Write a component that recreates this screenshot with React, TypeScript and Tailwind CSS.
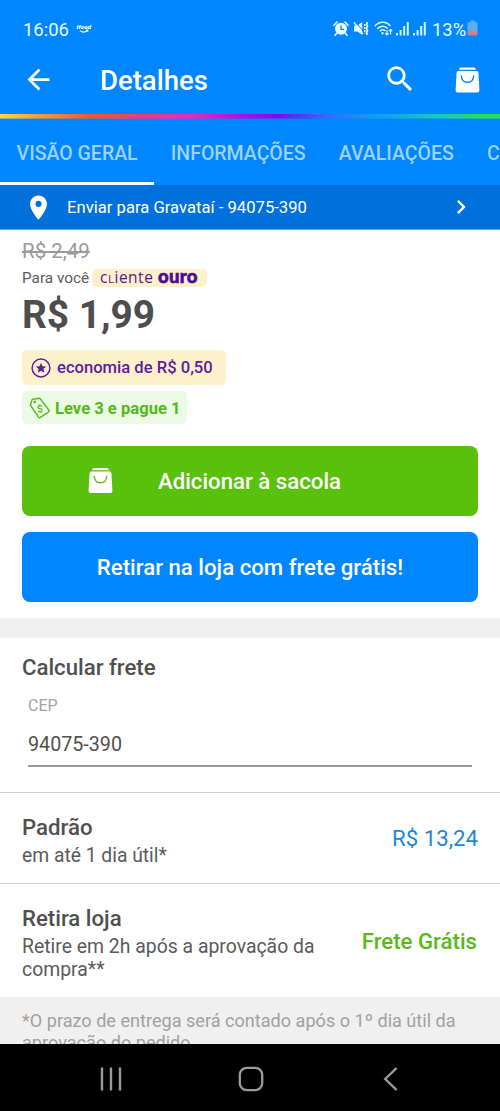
import { MdArrowBack, MdChevronRight, MdPlace, MdSearch } from "react-icons/md";

const tabs = ["VISÃO GERAL", "INFORMAÇÕES", "AVALIAÇÕES", "C"];

function BagIcon({ className, stroke }: { className: string; stroke: string }) {
  return (
    <svg viewBox="0 0 25 26" className={className} fill="none">
      <path d="M6.2 0.6h12.6c1.2 0 1.9.8 2.2 2.2H4c.3-1.4 1-2.2 2.2-2.2z" fill="#fff" />
      <path d="M3.4 4h18.2c1 0 1.7.6 1.8 1.5l1 17.6c.1 1.5-.7 2.5-2 2.5H2.6c-1.3 0-2.1-1-2-2.5l1-17.6C1.7 4.6 2.4 4 3.4 4z" fill="#fff" />
      <path d="M6.3 9c.3 4.1 2.7 6.2 6.2 6.2s5.9-2.1 6.200-6.200" stroke={stroke} strokeWidth="1.4" strokeLinecap="round" />
    </svg>
  );
}

function AlarmIcon() {
  return (
    <svg viewBox="0 0 16 15" className="h-[15px] w-4" fill="none">
      <circle cx="8" cy="7.8" r="6" fill="#eaffff" />
      <path d="M1 4.3 4 1M15 4.3 12 1M3.7 12.3 2 14.3M12.3 12.3l1.7 2" stroke="#eaffff" strokeWidth="1.6" strokeLinecap="round" />
      <path d="M8 4.3v4h3.2" stroke="#0086ff" strokeWidth="1.3" />
    </svg>
  );
}

function MuteIcon() {
  return (
    <svg viewBox="0 0 16 15" className="h-[15px] w-4" fill="none">
      <path d="M1 4.8h3L9.2 1v13L4.5 10.5H1z" fill="#eaffff" />
      <path d="M2.2 0.5 10.5 10.5" stroke="#0086ff" strokeWidth="1" />
      <path d="M.8 1.2 9.8 12.8" stroke="#eaffff" strokeWidth="1.3" />
      <path d="M11.7 3v9.5" stroke="#eaffff" strokeWidth="1.5" strokeDasharray="2 1" />
      <path d="m14.5 1-1 2.2 1 2.1-1 2.2 1 2.1-1 2.2 1 2.2" stroke="#eaffff" strokeWidth="1.7" />
    </svg>
  );
}

function WifiIcon() {
  return (
    <svg viewBox="0 0 19 15" className="h-[15px] w-[19px]" fill="none">
      <path d="M.8 5.2C5-.1 12.2-.1 16.3 4.9M3.3 7.8C6.2 4.3 11 4.3 13.8 7.5M5.8 10.3c1.7-2 4-2 5.6-.2" stroke="#dffbff" strokeWidth="1.5" />
      <path d="m8.6 13.8-1.7-2c1-.9 2.4-.9 3.3 0z" fill="#dffbff" />
      <path d="M13 9v5m-1.7-1.8L13 13.9l1.7-1.7M16.6 13.5V8.5M15 10.2l1.6-1.8 1.6 1.8" stroke="#dffbff" strokeWidth="1.2" />
    </svg>
  );
}

function SignalIcon() {
  return (
    <svg viewBox="0 0 13 15" className="h-[15px] w-[13px]" fill="#d5f7ff">
      <rect x="0" y="12" width="2" height="2.5" />
      <rect x="3.6" y="9" width="2" height="5.5" />
      <rect x="7.2" y="5" width="2" height="9.5" />
      <rect x="10.8" y="1" width="2" height="13.5" />
    </svg>
  );
}

function BatteryIcon() {
  return (
    <svg viewBox="0 0 11 16" className="-mt-0.5 h-4 w-[11px]">
      <path d="M3.5 0.5h4v1.7h1.7c.8 0 1.3.5 1.3 1.3V11H.5V3.5c0-.8.5-1.3 1.3-1.3h1.7z" fill="#63adee" />
      <path d="M.5 11h10v3.2c0 .8-.5 1.3-1.3 1.3H1.8c-.8 0-1.3-.5-1.3-1.3z" fill="#d97b88" />
    </svg>
  );
}

function StatusBar() {
  return (
    <div className="flex h-[58px] items-center pl-[23px] pr-[22px] text-[#e6fbff]">
      <span className="w-[47px] pt-px text-[18.4px]">16:06</span>
      <svg viewBox="0 0 16 13" className="mb-0.5 ml-1.5 h-[13px] w-4" fill="none">
        <text x="0.5" y="7" fontSize="6.2" fontWeight="900" fontStyle="italic" fill="#fff" textLength="14.5" lengthAdjust="spacingAndGlyphs">
          ifood
        </text>
        <path d="M4 8.7c2.2 1.9 5.2 1.7 7.5-.4M9.8 8.1l2-.2-.2 1.9" stroke="#fff" strokeWidth="1.1" />
      </svg>
      <div className="ml-auto flex items-center">
        <span className="-ml-0.5 flex"><AlarmIcon /></span>
        <span className="ml-1 flex"><MuteIcon /></span>
        <span className="ml-[5px] flex"><WifiIcon /></span>
        <span className="ml-[3px] flex"><SignalIcon /></span>
        <span className="ml-1 flex"><SignalIcon /></span>
        <span className="ml-1.5 w-[35px] pt-px text-[18.4px]">13%</span>
        <BatteryIcon />
      </div>
    </div>
  );
}

function Header() {
  return (
    <header className="bg-[#0086ff] text-white">
      <StatusBar />
      <div className="flex h-14 items-start">
        <MdArrowBack className="ml-[22px] mt-[5px] size-[33px]" />
        <h1 className="ml-[45px] w-[283px] text-[27.5px] font-medium leading-[45px]">Detalhes</h1>
        <MdSearch className="mt-1 size-[34px]" />
        <BagIcon className="ml-[38px] mt-[9px] h-[26px] w-[25px]" stroke="#0086ff" />
      </div>
      <div className="h-[5px] border-b border-[#0086ff]/40 bg-linear-[90deg,#f5dc50_0%,#eea43c_7%,#ea5a36_18%,#f03c6e_28%,#ee28b8_38%,#a616e0_48%,#7012f5_56%,#3070fa_66%,#10a0f0_76%,#18c8b8_87%,#20e060_97%]" />
      <nav className="flex h-[66px] overflow-hidden text-[19.5px] font-medium text-[#9dd3fb]">
        {tabs.map((tab, i) => (
          <div
            key={tab}
            className={`flex shrink-0 items-center border-b-3 px-[16.6px] pt-[6px] ${
              i === 0 ? "border-[#f2fbff]" : "border-transparent"
            }`}
          >
            {tab}
          </div>
        ))}
      </nav>
    </header>
  );
}

function AddressBar() {
  return (
    <div className="flex h-[45px] items-center border-b border-[#5ea9ec] bg-[#0071dc] text-white">
      <MdPlace className="ml-6 size-[29px]" />
      <span className="ml-[14px] pt-[3px] text-[16.65px]">Enviar para Gravataí - 94075-390</span>
      <MdChevronRight className="ml-auto mr-[25px] size-[28px]" />
    </div>
  );
}

function OuroBadge() {
  return (
    <span className="ml-[3px] flex h-[18px] w-[115px] items-baseline rounded-[5px] bg-[#fcf1cb] pl-2 leading-[14px] text-[#5c1590]">
      <span className="w-[58px] whitespace-nowrap font-['Open_Sans',sans-serif] text-[15.5px] tracking-[0.5px]">
        c<span className="text-[11.5px]">L</span>iente
      </span>
      <span className="font-[Lato,sans-serif] text-[18.5px] font-black tracking-[0.3px] text-[#4c0a96] [-webkit-text-stroke:0.6px_#4c0a96]">
        ouro
      </span>
    </span>
  );
}

function PriceSection() {
  return (
    <section className="px-[22px] pb-4 pt-[7px]">
      <p className="text-[20.5px] leading-7 text-[#9a9a9a] line-through decoration-[1.5px]">R$ 2,49</p>
      <div className="flex h-[25px] items-center pt-px">
        <span className="pt-px text-[15.3px] text-[#5a5a5a]">Para você</span>
        <OuroBadge />
      </div>
      <p className="text-[38.8px] font-bold leading-[49px] text-[#4d4d4d]">R$ 1,99</p>

      <div className="mt-[11px] flex h-[35px] w-[204px] items-center rounded-[5px] bg-[#fcf1cb] text-[#5f1ba0]">
        <svg viewBox="0 0 20 20" className="ml-[9px] size-5" fill="none">
          <circle cx="10" cy="10" r="8.9" stroke="currentColor" strokeWidth="1.5" />
          <path d="m10 4.8 1.5 3.4 3.7.4-2.8 2.5.8 3.6-3.2-1.9-3.2 1.9.8-3.6-2.8-2.5 3.7-.4z" fill="currentColor" />
        </svg>
        <span className="ml-1.5 whitespace-nowrap pt-0.5 text-[16.6px] font-medium">economia de R$ 0,50</span>
      </div>

      <div className="mt-1.5 flex h-[33px] w-[165px] items-center rounded-[5px] bg-[#ecf9e4] text-[#55b91a]">
        <svg viewBox="0 0 22 22" className="ml-[7px] size-[22px]" fill="none" stroke="currentColor" strokeWidth="1.4" strokeLinejoin="round">
          <path d="M4 2.3 9.8 1.2c.6 0 1.1.2 1.5.6l8.600 11.300c.4.6.3 1.300-.3 1.700l-8.300 5.600c-.6.4-1.300.3-1.700-.3L1.900 9c-.3-.4-.4-.9-.3-1.500l1.300-4.400c.2-.5.6-.8 1.100-.8z" />
          <circle cx="5.7" cy="4.900" r=".6" fill="currentColor" />
          <path d="M12.8 9.300c-1.500-1.200-4.200-.3-3.900 1.300.3 1.500 3.900.4 4.300 2.200.3 1.700-2.700 2.500-4 1.200M9.900 7.400l.6 1.600M11.800 14.300l.6 1.600" strokeWidth="1.2" />
        </svg>
        <span className="ml-1 whitespace-nowrap pt-[3px] text-[16.6px] font-bold">Leve 3 e pague 1</span>
      </div>

      <button className="mt-[22px] flex h-[70px] w-full items-center rounded-lg bg-[#59c00c] text-left text-white">
        <BagIcon className="-mt-0.5 ml-[66px] h-[27px] w-[25px]" stroke="#59c00c" />
        <span className="ml-[45px] pt-0.5 text-[22.2px] font-medium">Adicionar à sacola</span>
      </button>
      <button className="mt-4 flex h-[70px] w-full items-center justify-center rounded-lg bg-[#0086ff] pt-0.5 text-[22.2px] font-medium text-white">
        Retirar na loja com frete grátis!
      </button>
    </section>
  );
}

function ShippingSection() {
  return (
    <section className="border-t-[20px] border-[#f0f0f0] text-[#4f4f4f]">
      <div className="h-[155px] border-b border-[#cdcdcd] px-[22px] pt-[15px]">
        <h2 className="text-[22.2px] font-medium leading-7">Calcular frete</h2>
        <div className="mx-1.5 mt-3">
          <label className="block text-[16px] leading-[26px] text-[#a3a3a3]">CEP</label>
          <p className="h-12 border-b-2 border-[#9b9b9b] pt-3 text-[19.7px] leading-[28px]">94075-390</p>
        </div>
      </div>

      <div className="flex h-[91px] items-center justify-between border-b border-[#cdcdcd] px-[22px]">
        <div className="pt-[5px]">
          <h3 className="-mt-px text-[22.2px] font-medium leading-[30px]">Padrão</h3>
          <p className="pt-px text-[19.3px] leading-[26px] text-[#5a5a5a]">em até 1 dia útil*</p>
        </div>
        <span className="pt-0.5 text-[22.2px] text-[#1c86dc]">R$ 13,24</span>
      </div>

      <div className="flex h-[113px] justify-between px-[22px]">
        <div className="pt-[19px]">
          <h3 className="text-[22.2px] font-medium leading-[30px]">Retira loja</h3>
          <p className="w-[310px] pt-[2px] text-[19.4px] leading-[23px] text-[#5a5a5a]">
            Retire em 2h após a aprovação da compra**
          </p>
        </div>
        <span className="self-center whitespace-nowrap pr-px pt-0.5 text-[22.2px] font-medium text-[#5bb917]">Frete Grátis</span>
      </div>
    </section>
  );
}

function SystemNav() {
  return (
    <footer className="flex h-[67px] items-center bg-black">
      <svg viewBox="0 0 24 24" className="ml-[99px] mt-0.5 size-6" stroke="#9b9b9b" strokeWidth="2.4">
        <path d="M3 0.5v23M12 0.5v23M21 0.5v23" />
      </svg>
      <svg viewBox="0 0 26 26" className="ml-[115px] mt-0.5 size-[26px]" fill="none" stroke="#9b9b9b" strokeWidth="2.3">
        <rect x="1.8" y="1.8" width="22.4" height="22.4" rx="7" />
      </svg>
      <svg viewBox="0 0 15 24" className="ml-[119px] mt-0.5 h-6 w-[15px]" fill="none" stroke="#9b9b9b" strokeWidth="2.3">
        <path d="M13.5 1.2 2.2 12l11.3 10.8" />
      </svg>
    </footer>
  );
}

export default function App() {
  return (
    <div className="flex h-[1111px] w-[500px] flex-col overflow-hidden bg-white font-[Roboto,sans-serif]">
      <Header />
      <AddressBar />
      <main className="min-h-0 flex-1 overflow-hidden">
        <PriceSection />
        <ShippingSection />
        <div className="h-20 bg-[#f0f0f0] px-[22px] pt-[13px] text-[18.1px] leading-[21.5px] text-[#a0a0a0]">
          *O prazo de entrega será contado após o 1º dia útil da aprovação do pedido.
        </div>
      </main>
      <SystemNav />
    </div>
  );
}
